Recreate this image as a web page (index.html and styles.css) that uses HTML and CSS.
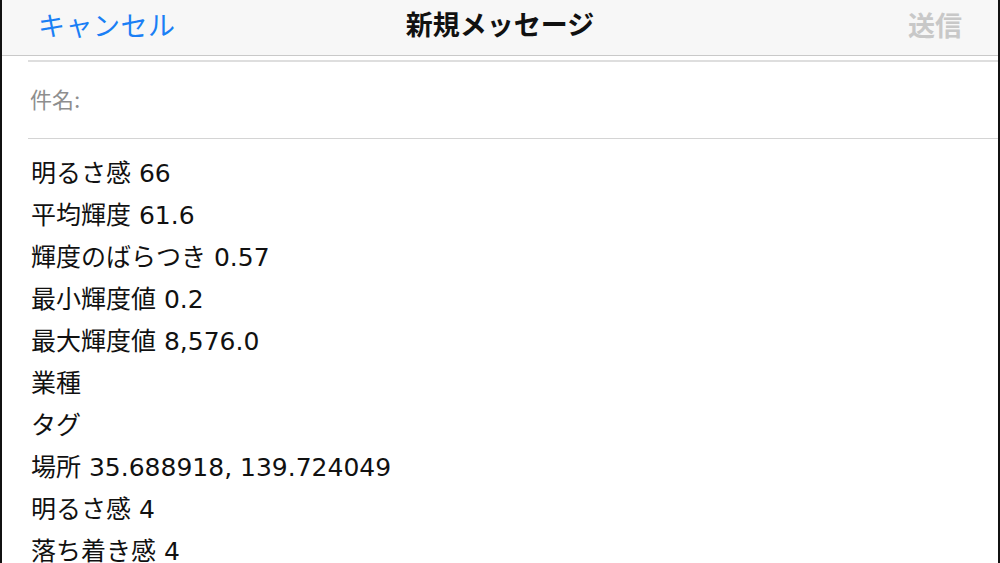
FILE: index.html
```html
<!DOCTYPE html>
<html lang="ja">
<head>
<meta charset="utf-8">
<link rel="stylesheet" href="styles.css">
</head>
<body>
<div class="screen">
  <header class="navbar">
    <span class="nav-btn cancel">キャンセル</span>
    <span class="nav-title">新規メッセージ</span>
    <span class="nav-btn send">送信</span>
  </header>
  <div class="compose">
    <div class="field">件名:</div>
    <div class="body">
      <div class="line">明るさ感 66</div>
      <div class="line">平均輝度 61.6</div>
      <div class="line">輝度のばらつき 0.57</div>
      <div class="line">最小輝度値 0.2</div>
      <div class="line">最大輝度値 8,576.0</div>
      <div class="line">業種</div>
      <div class="line">タグ</div>
      <div class="line">場所 35.688918, 139.724049</div>
      <div class="line">明るさ感 4</div>
      <div class="line">落ち着き感 4</div>
    </div>
  </div>
</div>
</body>
</html>
```
FILE: styles.css
```css
html, body {
  margin: 0;
  padding: 0;
  background: #fff;
}
body {
  font-family: "Inter", "Noto Sans CJK JP", sans-serif;
  overflow: hidden;
}
.screen {
  width: 1000px;
  height: 563px;
  box-sizing: border-box;
  border-left: 2px solid #111;
  border-right: 2px solid #111;
  overflow: hidden;
}
.navbar {
  height: 56px;
  background: #f7f7f7;
  border-bottom: 1px solid #c9c9c9;
  display: flex;
  align-items: center;
  justify-content: space-between;
  padding: 0 36px 2px 36px;
  box-sizing: border-box;
  position: relative;
}
.nav-btn {
  font-size: 27px;
  line-height: 1;
}
.cancel {
  color: #1a7ff5;
  letter-spacing: 0.5px;
}
.send {
  color: #c8c8c8;
  font-weight: bold;
}
.nav-title {
  position: absolute;
  left: 0;
  right: 0;
  top: 12px;
  line-height: 1;
  text-align: center;
  font-size: 27px;
  font-weight: bold;
  color: #111;
  pointer-events: none;
}
.compose {
  padding-left: 26px;
  padding-top: 4px;
}
.field {
  border-top: 2px solid #dedede;
  border-bottom: 1px solid #d4d4d4;
  height: 79px;
  box-sizing: border-box;
  display: flex;
  align-items: center;
  font-size: 22px;
  color: #8e8e8e;
  padding-left: 2px;
  padding-bottom: 4px;
}
.body {
  padding-top: 14px;
  padding-left: 3px;
}
.line {
  font-family: "DejaVu Sans", "Noto Sans CJK JP", sans-serif;
  font-size: 25px;
  line-height: 42px;
  color: #111;
}
```
